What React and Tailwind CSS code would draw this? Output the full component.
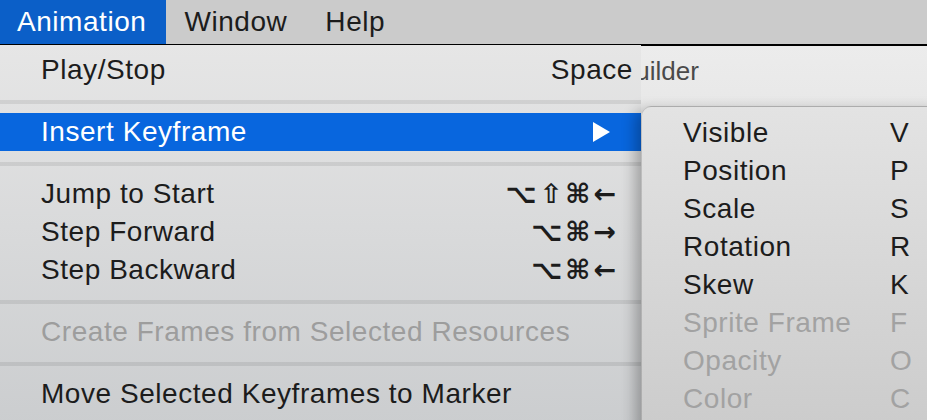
import React from "react";

const font = { fontFamily: '"Liberation Sans", Arial, sans-serif' };

const mainItems = [
  { label: "Play/Stop", shortcut: "Space", wide: true },
  { sep: true },
  { label: "Insert Keyframe", active: true, submenu: true },
  { sep: true },
  { label: "Jump to Start", shortcut: "⌥⇧⌘←" },
  { label: "Step Forward", shortcut: "⌥⌘→" },
  { label: "Step Backward", shortcut: "⌥⌘←" },
  { sep: true },
  { label: "Create Frames from Selected Resources", disabled: true },
  { sep: true },
  { label: "Move Selected Keyframes to Marker" },
];

const subItems = [
  { label: "Visible", key: "V" },
  { label: "Position", key: "P" },
  { label: "Scale", key: "S" },
  { label: "Rotation", key: "R" },
  { label: "Skew", key: "K" },
  { label: "Sprite Frame", key: "F", disabled: true },
  { label: "Opacity", key: "O", disabled: true },
  { label: "Color", key: "C", disabled: true },
];

export default function App() {
  return (
    <div
      className="relative w-[927px] h-[420px] overflow-hidden bg-[#d6d6d6] text-[28px] tracking-[0.55px] text-[#1c1c1c]"
      style={font}
    >
      {/* Menu bar */}
      <div className="flex h-[45px] bg-[#cbcbcb] border-b border-[#b6b6b6]">
        <div className="flex items-center pl-[17px] pr-[20px] bg-[#0b5fc8] text-white">Animation</div>
        <div className="flex items-center pl-[18px] pr-[38px]">Window</div>
        <div className="flex items-center">Help</div>
      </div>

      {/* Window behind */}
      <div className="h-[375px] border-t-2 border-black bg-gradient-to-b from-[#ececec] to-[#d4d4d4] -mt-px">
        <div className="pl-[618px] pt-[6px] text-[26px] tracking-normal text-[#4a4a4a]">Builder</div>
      </div>

      {/* Animation menu */}
      <div className="absolute left-0 top-[45px] w-[641px] h-[380px] pt-[6px] bg-gradient-to-b from-[#e6e6e6] to-[#cbcdcf]">
        {mainItems.map((it, i) =>
          it.sep ? (
            <div key={i} className="h-[24px] pt-[11px]">
              <div className="h-[4px] bg-black/[0.08]" />
            </div>
          ) : (
            <div
              key={i}
              className={
                "flex items-center h-[38px] pl-[41px] pr-[25px] " +
                (it.active ? "bg-[#0866de] text-white" : it.disabled ? "text-[#9d9d9d]" : "")
              }
            >
              <span className="flex-1">{it.label}</span>
              {it.shortcut &&
                (it.wide ? (
                  <span className="-mr-[17px]">{it.shortcut}</span>
                ) : (
                  <span
                    className="flex gap-[3px] text-[27px] font-bold tracking-normal"
                    style={{ fontFamily: '"DejaVu Sans", sans-serif' }}
                  >
                    {[...it.shortcut].map((g, j) => (
                      <span key={j}>{g}</span>
                    ))}
                  </span>
                ))}
              {it.submenu && (
                <svg width="17" height="20" viewBox="0 0 17 20" className="mr-[6px]">
                  <path d="M0 0 L17 10 L0 20 Z" fill="white" />
                </svg>
              )}
            </div>
          )
        )}
      </div>

      {/* Insert Keyframe submenu */}
      <div className="absolute left-[641px] top-[106px] w-[300px] h-[330px] pt-[7px] rounded-tl-[10px] border-l border-t border-black/15 bg-gradient-to-b from-[#e3e3e3] to-[#cbcbcb] shadow-[-6px_4px_14px_rgba(0,0,0,0.28)]">
        {subItems.map((it, i) => (
          <div
            key={i}
            className={"flex items-center h-[38px] pl-[41px] " + (it.disabled ? "text-[#a2a2a2]" : "")}
          >
            <span className="w-[207px]">{it.label}</span>
            <span>{it.key}</span>
          </div>
        ))}
      </div>
    </div>
  );
}
